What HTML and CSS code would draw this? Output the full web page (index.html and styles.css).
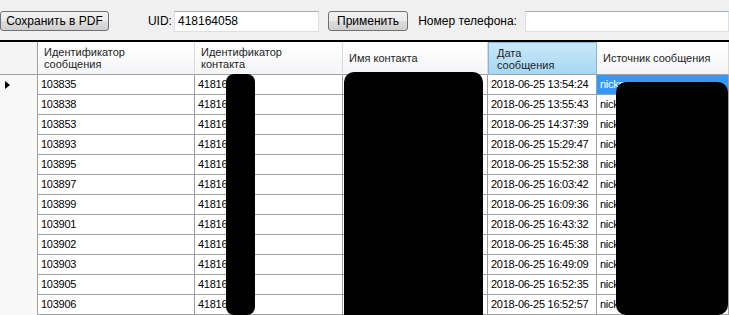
FILE: index.html
```html
<!DOCTYPE html>
<html lang="ru">
  <head>
    <meta charset="UTF-8" />
    <meta name="viewport" content="width=device-width, initial-scale=1.0" />
    <title>Сообщения</title>
    <link rel="stylesheet" href="styles.css">
  </head>
  <body>
    <div class="toolbar">
      <button class="btn btn-pdf">Сохранить в PDF</button>
      <label class="field-label label-uid">UID:</label>
      <input class="field field-uid" type="text" value="418164058" />
      <button class="btn btn-apply">Применить</button>
      <label class="field-label label-phone">Номер телефона:</label>
      <input class="field field-phone" type="text" />
    </div>

    <div class="grid-wrap">
      <div class="grid">
        <div class="row head">
          <div class="hc corner"></div>
          <div class="hc">Идентификатор<br />сообщения</div>
          <div class="hc">Идентификатор<br />контакта</div>
          <div class="hc">Имя контакта</div>
          <div class="hc sorted">Дата<br />сообщения</div>
          <div class="hc">Источник сообщения</div>
        </div>

        <div class="row">
          <div class="rh"><span class="arrow"></span></div>
          <div class="cell">103835</div>
          <div class="cell">418164058</div>
          <div class="cell">Контакт</div>
          <div class="cell">2018-06-25 13:54:24</div>
          <div class="cell selected">nickname</div>
        </div>
        <div class="row">
          <div class="rh"></div>
          <div class="cell">103838</div>
          <div class="cell">418164058</div>
          <div class="cell">Контакт</div>
          <div class="cell">2018-06-25 13:55:43</div>
          <div class="cell">nickname</div>
        </div>
        <div class="row">
          <div class="rh"></div>
          <div class="cell">103853</div>
          <div class="cell">418164058</div>
          <div class="cell">Контакт</div>
          <div class="cell">2018-06-25 14:37:39</div>
          <div class="cell">nickname</div>
        </div>
        <div class="row">
          <div class="rh"></div>
          <div class="cell">103893</div>
          <div class="cell">418164058</div>
          <div class="cell">Контакт</div>
          <div class="cell">2018-06-25 15:29:47</div>
          <div class="cell">nickname</div>
        </div>
        <div class="row">
          <div class="rh"></div>
          <div class="cell">103895</div>
          <div class="cell">418164058</div>
          <div class="cell">Контакт</div>
          <div class="cell">2018-06-25 15:52:38</div>
          <div class="cell">nickname</div>
        </div>
        <div class="row">
          <div class="rh"></div>
          <div class="cell">103897</div>
          <div class="cell">418164058</div>
          <div class="cell">Контакт</div>
          <div class="cell">2018-06-25 16:03:42</div>
          <div class="cell">nickname</div>
        </div>
        <div class="row">
          <div class="rh"></div>
          <div class="cell">103899</div>
          <div class="cell">418164058</div>
          <div class="cell">Контакт</div>
          <div class="cell">2018-06-25 16:09:36</div>
          <div class="cell">nickname</div>
        </div>
        <div class="row">
          <div class="rh"></div>
          <div class="cell">103901</div>
          <div class="cell">418164058</div>
          <div class="cell">Контакт</div>
          <div class="cell">2018-06-25 16:43:32</div>
          <div class="cell">nickname</div>
        </div>
        <div class="row">
          <div class="rh"></div>
          <div class="cell">103902</div>
          <div class="cell">418164058</div>
          <div class="cell">Контакт</div>
          <div class="cell">2018-06-25 16:45:38</div>
          <div class="cell">nickname</div>
        </div>
        <div class="row">
          <div class="rh"></div>
          <div class="cell">103903</div>
          <div class="cell">418164058</div>
          <div class="cell">Контакт</div>
          <div class="cell">2018-06-25 16:49:09</div>
          <div class="cell">nickname</div>
        </div>
        <div class="row">
          <div class="rh"></div>
          <div class="cell">103905</div>
          <div class="cell">418164058</div>
          <div class="cell">Контакт</div>
          <div class="cell">2018-06-25 16:52:35</div>
          <div class="cell">nickname</div>
        </div>
        <div class="row">
          <div class="rh"></div>
          <div class="cell">103906</div>
          <div class="cell">418164058</div>
          <div class="cell">Контакт</div>
          <div class="cell">2018-06-25 16:52:57</div>
          <div class="cell">nickname</div>
        </div>
      </div>

      <!-- закрашенные области -->
      <div class="redact redact-uid"></div>
      <div class="redact redact-name"></div>
      <div class="redact redact-source"></div>
    </div>
  </body>
</html>
```

FILE: styles.css
```css
* {
  margin: 0;
  padding: 0;
  box-sizing: border-box;
}

body {
  background: #f0f0f0;
  font-family: "Liberation Sans", Arial, sans-serif;
  font-size: 12px;
  color: #000;
  overflow: hidden;
}

/* верхняя панель */
.toolbar {
  display: flex;
  align-items: center;
  height: 40px;
  padding-top: 2px;
  white-space: nowrap;
}

.btn {
  height: 20px;
  border: 1px solid #707070;
  border-radius: 3px;
  background: linear-gradient(#f2f2f2 0%, #ebebeb 50%, #dddddd 51%, #cfcfcf 100%);
  font-family: "Liberation Sans", Arial, sans-serif;
  font-size: 12px;
  color: #000;
}

.btn-pdf {
  width: 110px;
}

.btn-apply {
  width: 81px;
  margin-left: 9px;
}

.field-label {
  font-size: 12px;
}

.label-uid {
  margin-left: 39px;
}

.label-phone {
  margin-left: 10px;
}

.field {
  height: 21px;
  border: 1px solid #dbdfe6;
  border-top-color: #abadb3;
  background: white;
  padding-left: 3px;
  font-family: "Liberation Sans", Arial, sans-serif;
  font-size: 12px;
  color: #000;
  outline: none;
}

.field-uid {
  width: 145px;
  margin-left: 2px;
}

.field-phone {
  width: 206px;
  margin-left: 8px;
}

/* таблица */
.grid-wrap {
  position: relative;
  height: 275px;
  overflow: hidden;
  border-top: 2px solid #000;
}

.grid {
  background: white;
  font-size: 11px;
}

.row {
  display: grid;
  grid-template-columns: 38px 157px 148px 145px 109px 132px;
  height: 20px;
}

.row.head {
  height: 33px;
}

.hc {
  display: flex;
  align-items: center;
  padding-left: 6px;
  line-height: 12px;
  color: #1e1e1e;
  white-space: nowrap;
  overflow: hidden;
  background: linear-gradient(#ffffff, #f4f5f7);
  border-right: 1px solid #dadada;
  border-bottom: 1px solid #a0a0a0;
}

.hc.corner {
  background: #f4f4f4;
  border-right-color: #a0a0a0;
}

.hc.sorted {
  padding-left: 8px;
  background: linear-gradient(#c9e8fa, #a6d7f3);
  border: 1px solid #7fb8df;
  border-bottom-color: #a0a0a0;
}

.rh {
  position: relative;
  background: #f8f8f8;
  border-right: 1px solid #a0a0a0;
}

.arrow {
  position: absolute;
  left: 5px;
  top: 6px;
  border-left: 5px solid #000;
  border-top: 4px solid transparent;
  border-bottom: 4px solid transparent;
}

.cell {
  padding-left: 3px;
  line-height: 19px;
  letter-spacing: -0.25px;
  white-space: nowrap;
  overflow: hidden;
  border-right: 1px solid #a0a0a0;
  border-bottom: 1px solid #a0a0a0;
}

.cell.selected {
  background: #3399ff;
  color: white;
}

/* закрашенные данные */
.redact {
  position: absolute;
  background: #000;
  border-radius: 8px;
}

.redact-uid {
  left: 226px;
  top: 32px;
  width: 29px;
  height: 241px;
}

.redact-name {
  left: 344px;
  top: 30px;
  width: 139px;
  height: 245px;
  border-radius: 10px 10px 0 0;
}

.redact-source {
  left: 616px;
  top: 40px;
  width: 112px;
  height: 233px;
  border-radius: 10px;
}
```
